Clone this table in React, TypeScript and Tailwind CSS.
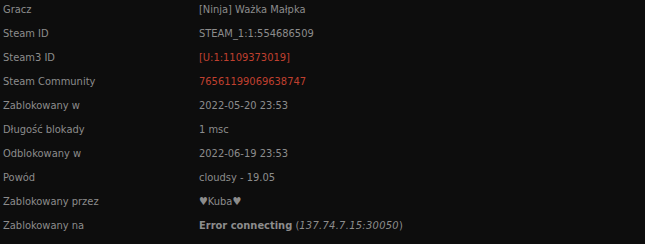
type Row = {
   label: string
   value: React.ReactNode
}

const rows: Row[] = [
   { label: 'Gracz', value: '[Ninja] Ważka Małpka' },
   { label: 'Steam ID', value: 'STEAM_1:1:554686509' },
   { label: 'Steam3 ID', value: <span className="text-[#c0402f]">[U:1:1109373019]</span> },
   { label: 'Steam Community', value: <span className="text-[#c0402f]">76561199069638747</span> },
   { label: 'Zablokowany w', value: '2022-05-20 23:53' },
   { label: 'Długość blokady', value: '1 msc' },
   { label: 'Odblokowany w', value: '2022-06-19 23:53' },
   { label: 'Powód', value: 'cloudsy - 19.05' },
   { label: 'Zablokowany przez', value: '♥Kuba♥' },
   {
      label: 'Zablokowany na',
      value: (
         <>
            <b className="font-bold">Error connecting</b> (<i className="tracking-[0.3px]">137.74.7.15:30050</i>)
         </>
      )
   }
]

export default function App() {
   return (
      <div className="w-[645px] h-[244px] overflow-hidden bg-[#0d0d0d] text-[#8c8c8c] text-[11px] font-['DejaVu_Sans_Condensed',Verdana,sans-serif]">
         <div className="-mt-[2px]">
            {rows.map(r => (
               <div key={r.label} className="flex h-6 items-center">
                  <div className="w-[199px] pl-[3px] shrink-0">{r.label}</div>
                  <div>{r.value}</div>
               </div>
            ))}
         </div>
      </div>
   )
}
